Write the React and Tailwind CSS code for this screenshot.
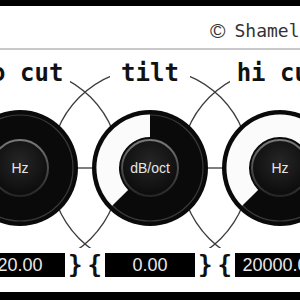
import React from "react";

const pt = (r, deg) => {
  const a = (deg * Math.PI) / 180;
  return [60 + r * Math.sin(a), 60 - r * Math.cos(a)];
};

function Knob({ value, unit, id }) {
  const ro = 53.5;
  const ri = 31;
  let path = null;
  if (value > 0) {
    const a0 = -135;
    const a1 = -135 + 270 * value;
    const large = a1 - a0 > 180 ? 1 : 0;
    const [x0, y0] = pt(ro, a0);
    const [x1, y1] = pt(ro, a1);
    const [x2, y2] = pt(ri, a1);
    const [x3, y3] = pt(ri, a0);
    path = `M${x0} ${y0} A${ro} ${ro} 0 ${large} 1 ${x1} ${y1} L${x2} ${y2} A${ri} ${ri} 0 ${large} 0 ${x3} ${y3} Z`;
  }
  return (
    <div className="relative w-[120px] h-[120px]">
      <svg width="120" height="120" viewBox="0 0 120 120" className="block">
        <defs>
          <radialGradient id={`cap-${id}`} cx="50%" cy="40%" r="60%">
            <stop offset="0%" stopColor="#262626" />
            <stop offset="100%" stopColor="#0b0b0b" />
          </radialGradient>
          <linearGradient id={`ring-${id}`} x1="0" y1="0" x2="0" y2="1">
            <stop offset="0%" stopColor="#7a7a7a" />
            <stop offset="60%" stopColor="#444" />
            <stop offset="100%" stopColor="#262626" />
          </linearGradient>
        </defs>
        <circle cx="60" cy="60" r="58" fill="#0a0a0a" />
        <circle cx="60" cy="60" r="53" fill="none" stroke="#3a3a3a" strokeWidth="1.2" />
        {path && <path d={path} fill="#fbfbfb" />}
        <circle cx="60" cy="60" r="28" fill={`url(#cap-${id})`} stroke={`url(#ring-${id})`} strokeWidth="2" />
      </svg>
      <div className="absolute inset-0 flex items-center justify-center text-[14px] text-[#e6e6e6] font-['Liberation_Sans',Arial,sans-serif]">
        {unit}
      </div>
    </div>
  );
}

const cols = "ml-[-45px] w-[390px] grid grid-cols-[130px_130px_130px]";

function Label({ text, w }) {
  return (
    <div className="flex justify-center">
      <div
        className={`${w} h-[25px] pt-[3px] shrink-0 bg-white text-center leading-[25px] text-[24px] font-bold text-[#111] whitespace-nowrap font-['DejaVu_Sans_Mono',monospace]`}
      >
        {text}
      </div>
    </div>
  );
}

function Value({ text }) {
  return (
    <div className="flex items-center justify-center gap-[3px]">
      <span className="text-[24px] leading-[24px] font-bold text-[#111] font-['DejaVu_Sans_Mono',monospace]">{"{"}</span>
      <div className="w-[90px] h-[24px] shrink-0 bg-black text-[#e8e8e8] text-[18px] leading-[24px] text-center whitespace-nowrap overflow-hidden font-['Liberation_Sans',Arial,sans-serif]">
        {text}
      </div>
      <span className="text-[24px] leading-[24px] font-bold text-[#111] font-['DejaVu_Sans_Mono',monospace]">{"}"}</span>
    </div>
  );
}

export default function App() {
  return (
    <div className="w-[300px] h-[300px] overflow-hidden bg-white flex flex-col">
      <div className="h-[6px] bg-black shrink-0" />
      <div className="h-[42px] shrink-0 flex items-start pt-[13px] pl-[210px] whitespace-nowrap text-[#333]">
        <span className="text-[21px] leading-[24px] font-['Liberation_Sans',Arial,sans-serif]">©</span>
        <span className="ml-[9px] text-[18px] leading-[24px] font-['DejaVu_Sans_Mono',monospace]">Shameless</span>
      </div>
      <div className="h-[2px] shrink-0 bg-[#c8c8c8]" />
      <div className="relative h-[242px] shrink-0">
        <svg className="absolute inset-0" width="300" height="242" viewBox="0 0 300 242">
          <g fill="none" stroke="#3c3c3c" strokeWidth="1.3">
            <circle cx="20" cy="118" r="100" />
            <circle cx="150" cy="118" r="100" />
            <circle cx="280" cy="118" r="100" />
          </g>
          <line x1="20" y1="118" x2="280" y2="118" stroke="#555" strokeWidth="1.5" />
        </svg>
        <div className="relative flex flex-col">
          <div className={`${cols} mt-[8px]`}>
            <Label text="lo cut" w="w-[100px]" />
            <Label text="tilt" w="w-[80px]" />
            <Label text="hi cut" w="w-[100px]" />
          </div>
          <div className={`${cols} mt-[25px]`}>
            <div className="flex justify-center">
              <Knob value={0} unit="Hz" id="a" />
            </div>
            <div className="flex justify-center">
              <Knob value={0.5} unit="dB/oct" id="b" />
            </div>
            <div className="flex justify-center">
              <Knob value={1} unit="Hz" id="c" />
            </div>
          </div>
          <div className="mt-[20px] h-[32px] pt-[5px] bg-white">
            <div className={cols}>
              <Value text="20.00" />
              <Value text="0.00" />
              <Value text="20000.00" />
            </div>
          </div>
        </div>
      </div>
      <div className="h-[8px] bg-black shrink-0" />
    </div>
  );
}
